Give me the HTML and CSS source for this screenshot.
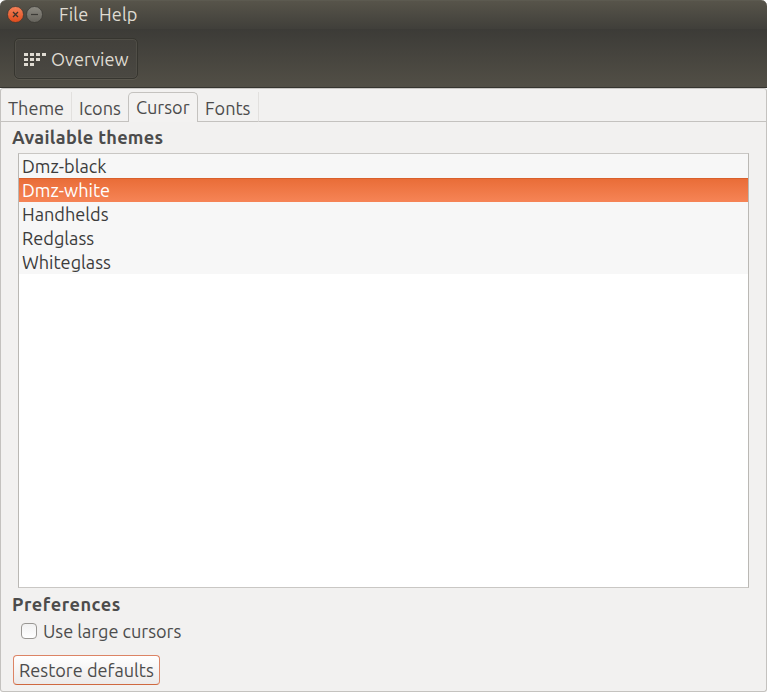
FILE: index.html
```html
<!DOCTYPE html>
<html lang="en">
<head>
<meta charset="utf-8">
<title>Themes</title>
<link rel="stylesheet" href="styles.css">
</head>
<body>
<div class="window">
  <header class="menubar">
    <svg class="controls" width="38" height="18" viewBox="0 0 38 18">
      <defs>
        <linearGradient id="close" x2="0" y2="1"><stop stop-color="#f5825a"/><stop offset="1" stop-color="#df4b1b"/></linearGradient>
        <linearGradient id="min" x2="0" y2="1"><stop stop-color="#8b8981"/><stop offset="1" stop-color="#65635c"/></linearGradient>
      </defs>
      <circle cx="9.5" cy="9.5" r="8" fill="url(#close)" stroke="#35342f" stroke-width=".7"/>
      <path d="M7 7l5 5M12 7l-5 5" stroke="#3e332b" stroke-width="1.3"/>
      <circle cx="28.5" cy="9.5" r="8" fill="url(#min)" stroke="#35342f" stroke-width=".7"/>
      <path d="M25 9.5h7" stroke="#3c3b37" stroke-width="1.2"/>
    </svg>
    <span class="menu menu-file">File</span>
    <span class="menu menu-help">Help</span>
  </header>
  <div class="toolbar">
    <button class="overview">
      <svg width="22" height="13" viewBox="0 0 22 13" fill="#dfdbd2" shape-rendering="crispEdges">
        <path d="M0 0h4v3H0zM6 0h4v3H6zM12 0h4v3h-4zM18 0h4v3h-4zM0 5h4v3H0zM6 5h4v3H6zM12 5h4v3h-4zM0 10h4v3H0zM6 10h4v3H6z"/>
      </svg>
      <span>Overview</span>
    </button>
  </div>
  <main class="content">
    <nav class="tabs">
      <span class="tab tab-theme">Theme</span>
      <span class="tab tab-icons">Icons</span>
      <span class="tab tab-cursor active">Cursor</span>
      <span class="tab tab-fonts">Fonts</span>
      <span class="rest"></span>
    </nav>
    <section class="page">
      <h2>Available themes</h2>
      <ul class="list">
        <li>Dmz-black</li>
        <li class="selected">Dmz-white</li>
        <li>Handhelds</li>
        <li>Redglass</li>
        <li>Whiteglass</li>
      </ul>
      <h2 class="prefs">Preferences</h2>
      <label class="check"><span class="box"></span><span class="check-text">Use large cursors</span></label>
      <button class="restore">Restore defaults</button>
    </section>
  </main>
</div>
</body>
</html>
```
FILE: styles.css
```css
* { box-sizing: border-box; }
body { margin: 0; background: #fff; font: 18.15px/24px "Ubuntu", "Noto Sans", sans-serif; color: #4c4c4c; }
button { font: inherit; margin: 0; }
span, li, h2, button { white-space: nowrap; }
.window { width: 767px; height: 692px; display: flex; flex-direction: column; }
.menubar { height: 29px; display: flex; align-items: flex-start; border-radius: 6px 6px 0 0; padding: 1px 0 0 6px; border-top: 1px solid #5c5a50; background: linear-gradient(#57544a, #403f3a); color: #dfdbd2; }
.controls { flex: none; margin-top: 3px; }
.menu-file { width: 40px; margin-left: 15px; }
.menu-file, .menu-help { letter-spacing: .15px; }
.toolbar { height: 59px; padding: 9px 14px; background: linear-gradient(#3c3b37, #524f46); border-bottom: 1px solid #35342f; }
.overview { display: flex; align-items: center; width: 124px; height: 41px; padding: 1px 0 0 9px; gap: 5px; border: 1px solid #36352f; border-radius: 5px; background: linear-gradient(#42403b, #4a4842); box-shadow: inset 0 0 0 1px #504e47, 0 1px #5a574e; color: #dfdbd2; }
.content { flex: 1; display: flex; flex-direction: column; border: 1px solid #c4c2bf; border-top-color: #c9c7c4; border-radius: 3px; background: #f2f1f0; }
.tabs { height: 33px; display: flex; align-items: stretch; flex: none; padding-top: 3px; }
.tab { border-bottom: 1px solid #c4c2bf; padding: 4px 0 0 7px; flex: none; }
.tab-theme { width: 71px; border-right: 1px solid #e2e0de; }
.tab-icons { width: 56px; }
.tab-cursor { width: 70px; }
.tab-fonts { width: 61px; border-right: 1px solid #e2e0de; }
.active { border: 1px solid #c4c2bf; border-bottom: 0; border-radius: 5px 5px 0 0; padding-top: 2px; background: #f3f2f1; }
.rest { flex: 1; border-bottom: 1px solid #c4c2bf; }
.page { flex: 1; padding: 3px 17px 0 11px; display: flex; flex-direction: column; align-items: flex-start; }
h2 { margin: 0; font-size: 18.15px; line-height: 24px; font-weight: 700; letter-spacing: .28px; }
.list { list-style: none; margin: 4px 0 0 6px; padding: 0; width: 731px; height: 435px; border: 1px solid #bab8b4; border-top-color: #c9c7c4; border-bottom-color: #c9c7c4; background: #fff; color: #3c3c3c; }
.list li { height: 24px; padding-left: 3px; background: #f7f7f7; }
.list .selected { color: #fff; background: linear-gradient(#e96d38, #f68456); border-top: 1px solid #d9602c; line-height: 22px; }
.prefs { margin-top: 4px; letter-spacing: .52px; }
.check { display: flex; align-items: center; height: 24px; margin: 3px 0 0 9px; gap: 6px; }
.check-text { letter-spacing: -.04px; }
.box { width: 16px; height: 16px; border: 1px solid #999793; border-radius: 4px; background: linear-gradient(#f1f1f1, #fff); }
.restore { width: 147px; height: 30px; margin: 12px 0 0 1px; padding: 0 0 0 5px; text-align: left; border: 1px solid #dc8465; border-bottom-color: #cf683f; border-radius: 4px; color: #4c4c4c; background: linear-gradient(#fff, #eceaea); }
```
